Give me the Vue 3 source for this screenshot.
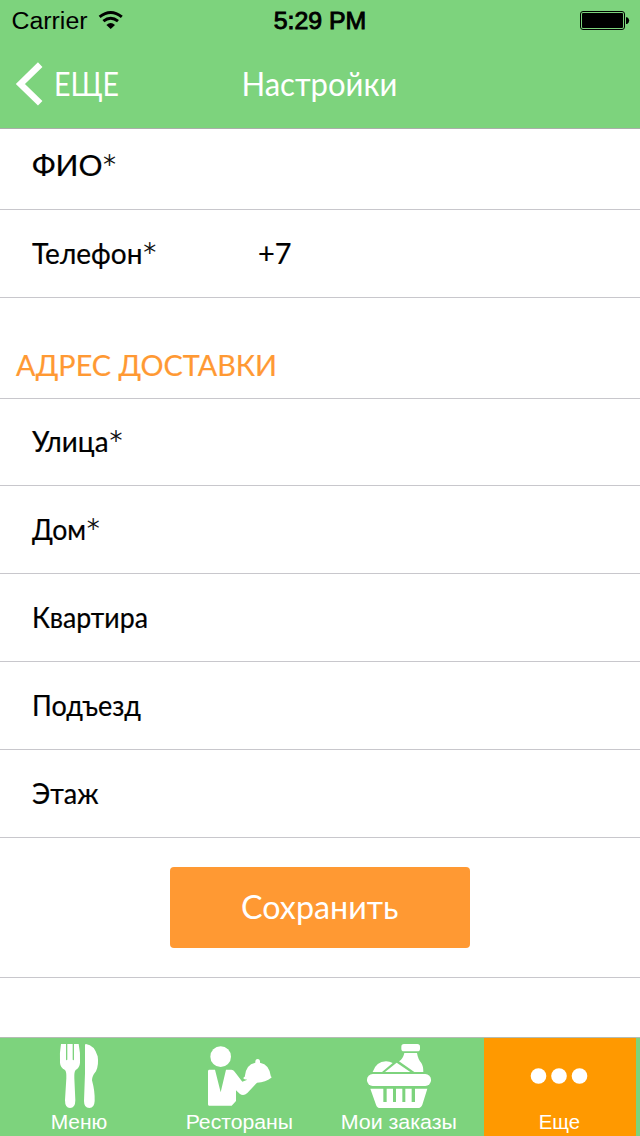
<script setup>
const contactRows = [
  { label: 'ФИО', width: 70.5, starX: 68.9, size: 'first' },
  { label: 'Телефон', width: 110.5, starX: 109.2, value: '+7' },
]
const addressRows = [
  { label: 'Улица', width: 76.5, starX: 75.6, size: 'short' },
  { label: 'Дом', width: 54, starX: 52.8 },
  { label: 'Квартира', width: 116 },
  { label: 'Подъезд', width: 109 },
  { label: 'Этаж', width: 66.5 },
]
</script>

<template>
  <div class="screen">
    <header class="header">
      <div class="status">
        <svg class="carrier" width="140" height="40">
          <text x="11.5" y="29" textLength="76" lengthAdjust="spacingAndGlyphs">Carrier</text>
          <g class="wifi">
            <path d="M99.6 16.9Q110.7 8.1 121.8 16.9" />
            <path d="M103.4 21.2Q110.7 15.4 118 21.2" />
            <path class="solid" d="M106.4 24.9Q110.7 21.3 115 24.9L110.7 29Z" />
          </g>
        </svg>
        <svg class="clock" width="100" height="40">
          <text x="3.7" y="28.7" textLength="92.6" lengthAdjust="spacingAndGlyphs">5:29 PM</text>
        </svg>
        <svg class="battery" width="60" height="40">
          <rect x="0.5" y="11.5" width="44" height="18" rx="2.5" fill="none" stroke="#000" />
          <rect x="2" y="13" width="41" height="15" rx="1" />
          <path d="M46 17.2h1.2q2 1.2 2 3.4t-2 3.4H46Z" />
        </svg>
      </div>
      <div class="nav">
        <svg class="back" width="140" height="88">
          <path d="M40.2 24.6 20.4 44 40.2 63.2" fill="none" stroke="#fff" stroke-width="6.4" />
          <text x="54" y="56" textLength="65" lengthAdjust="spacingAndGlyphs">ЕЩЕ</text>
        </svg>
        <svg class="title" width="160" height="88">
          <text x="1.4" y="56.3" textLength="156" lengthAdjust="spacingAndGlyphs">Настройки</text>
        </svg>
      </div>
    </header>

    <main>
      <div v-for="row in contactRows" :key="row.label" class="row" :class="row.size">
        <svg class="label" width="226" height="40">
          <text x="0" y="30.3" :textLength="row.width" lengthAdjust="spacingAndGlyphs">{{ row.label }}</text>
          <text class="star" :x="row.starX" y="38">*</text>
        </svg>
        <svg v-if="row.value" class="label" width="60" height="40">
          <text x="0" y="30.3" textLength="33.5" lengthAdjust="spacingAndGlyphs">{{ row.value }}</text>
        </svg>
      </div>
      <div class="section">
        <svg class="label" width="280" height="40">
          <text x="0" y="30.3" textLength="261" lengthAdjust="spacingAndGlyphs">АДРЕС ДОСТАВКИ</text>
        </svg>
      </div>
      <div v-for="row in addressRows" :key="row.label" class="row" :class="row.size">
        <svg class="label" width="226" height="40">
          <text x="0" y="30.3" :textLength="row.width" lengthAdjust="spacingAndGlyphs">{{ row.label }}</text>
          <text v-if="row.starX" class="star" :x="row.starX" y="38">*</text>
        </svg>
      </div>
      <div class="action">
        <button class="save">
          <svg width="300" height="81">
            <text x="71" y="52.3" textLength="157.5" lengthAdjust="spacingAndGlyphs">Сохранить</text>
          </svg>
        </button>
      </div>
    </main>

    <nav class="tabs">
      <div class="tab">
        <svg viewBox="-108 24 456 294">
          <path d="M63 42H78V88Q78 91 80 91T82 88V42H98V88Q98 91 100 91T102 88V42H116Q122 70 120 98Q119 113 107 120Q102 126 103 145L106 211Q106 234 90 234Q75 234 75 211L79 145Q80 126 75 120Q61 113 60 98Q58 70 63 42Z" />
          <path d="M138 42Q163 45 173 79Q177 104 168 124Q156 138 156 151Q165 184 164 213Q163 234 148 234Q132 234 132 213L135 130V45Q135 42 138 42Z" />
          <text x="32" y="297" textLength="170" lengthAdjust="spacingAndGlyphs">Меню</text>
        </svg>
      </div>
      <div class="tab">
        <svg viewBox="-48 24 456 294">
          <circle cx="122" cy="80" r="31" />
          <path d="M87 119H105L122 187L138 119H154Q160 119 164 125L187 155L202 149Q191 149 190 144Q190 140 199 140H275L274 143Q257 156 231 158L202 189Q190 200 179 191L168 181V213L155 227H87Q84 227 84 223V124Q84 119 87 119Z" />
          <path d="M194 141Q197 103 226 98Q225 87 233 87T240 98Q269 103 273 141Z" />
          <text x="17" y="297" textLength="322" lengthAdjust="spacingAndGlyphs">Рестораны</text>
        </svg>
      </div>
      <div class="tab">
        <svg viewBox="-33 24 456 294">
          <rect x="199" y="42" width="56" height="22" rx="8" />
          <path d="M208 69H246Q249 88 259 99Q265 108 265 126H238L192 94Q204 87 208 69Z" />
          <path d="M113 126Q123 95 153 94Q164 94 173 99L141 126Z" />
          <path d="M150 126 185 98 226 126Z" />
          <rect x="96" y="132" width="192" height="36" rx="17" />
          <path fill-rule="evenodd" d="M106 176H277L262 224Q258 234 248 234H136Q126 234 123 224ZM145 176V216H155V176ZM174 176V216H183V176ZM202 176V216H211V176ZM230 176V216H240V176Z" />
          <text x="17" y="297" textLength="349" lengthAdjust="spacingAndGlyphs">Мои заказы</text>
        </svg>
      </div>
      <div class="tab active">
        <svg viewBox="27 24 456 294">
          <circle cx="190.5" cy="138" r="23.5" />
          <circle cx="252" cy="138" r="23.5" />
          <circle cx="313.5" cy="138" r="23.5" />
          <text x="191" y="297" textLength="124" lengthAdjust="spacingAndGlyphs">Еще</text>
        </svg>
      </div>
    </nav>
  </div>
</template>

<style scoped>
.screen {
  width: 640px;
  height: 1136px;
  display: flex;
  flex-direction: column;
  background: #fff;
  overflow: hidden;
  font-family: Lato, "Open Sans", sans-serif;
}
svg {
  display: block;
  overflow: visible;
}
.header {
  height: 129px;
  box-sizing: border-box;
  background: #7dd37d;
  border-bottom: 1px solid #aaaeaa;
}
.status {
  height: 40px;
  display: grid;
  grid-template-columns: 270px 310px 60px;
  font-family: "Liberation Sans", Arial, sans-serif;
  font-size: 23.5px;
}
.clock {
  stroke: #000;
  stroke-width: 0.9px;
}
.wifi {
  fill: none;
  stroke: #000;
  stroke-width: 3;
}
.wifi .solid {
  fill: #000;
  stroke: none;
}
.nav {
  height: 88px;
  display: grid;
  grid-template-columns: 240px 160px;
  font-size: 33px;
  fill: #fff;
}
.row,
.section {
  box-sizing: border-box;
  display: flex;
  align-items: flex-end;
  border-bottom: 1px solid #c8c7cc;
  font-size: 28.5px;
}
.row {
  height: 88px;
  padding: 0 0 23px 31.5px;
}
.row .label {
  stroke: #000;
  stroke-width: 0.2px;
}
.row.first {
  height: 81px;
}
.row.short {
  height: 87px;
}
.row .star {
  font-size: 40px;
  font-weight: 300;
}
.section {
  height: 101px;
  padding: 0 0 12px 15.5px;
  fill: #ff9933;
  stroke: #ff9933;
  stroke-width: 0.2px;
}
.action {
  box-sizing: border-box;
  height: 140px;
  border-bottom: 1px solid #c8c7cc;
  display: flex;
  justify-content: center;
  align-items: center;
}
.save {
  width: 300px;
  height: 81px;
  padding: 0;
  border: 0;
  border-radius: 4px;
  background: #ff9933;
  fill: #fff;
  font-family: inherit;
  font-size: 33px;
}
.tabs {
  margin-top: auto;
  box-sizing: border-box;
  height: 99px;
  border-top: 1px solid #b4bcb4;
  background: #7dd37d;
  padding-left: 4px;
  display: grid;
  grid-template-columns: repeat(4, 152px);
  column-gap: 8px;
}
.tab {
  height: 98px;
  fill: #fff;
  font-family: "Liberation Sans", Arial, sans-serif;
  font-size: 59px;
}
.tab svg {
  width: 152px;
  height: 98px;
}
.tab.active {
  background: #ff9900;
}
</style>

<style>
body {
  margin: 0;
}
</style>
